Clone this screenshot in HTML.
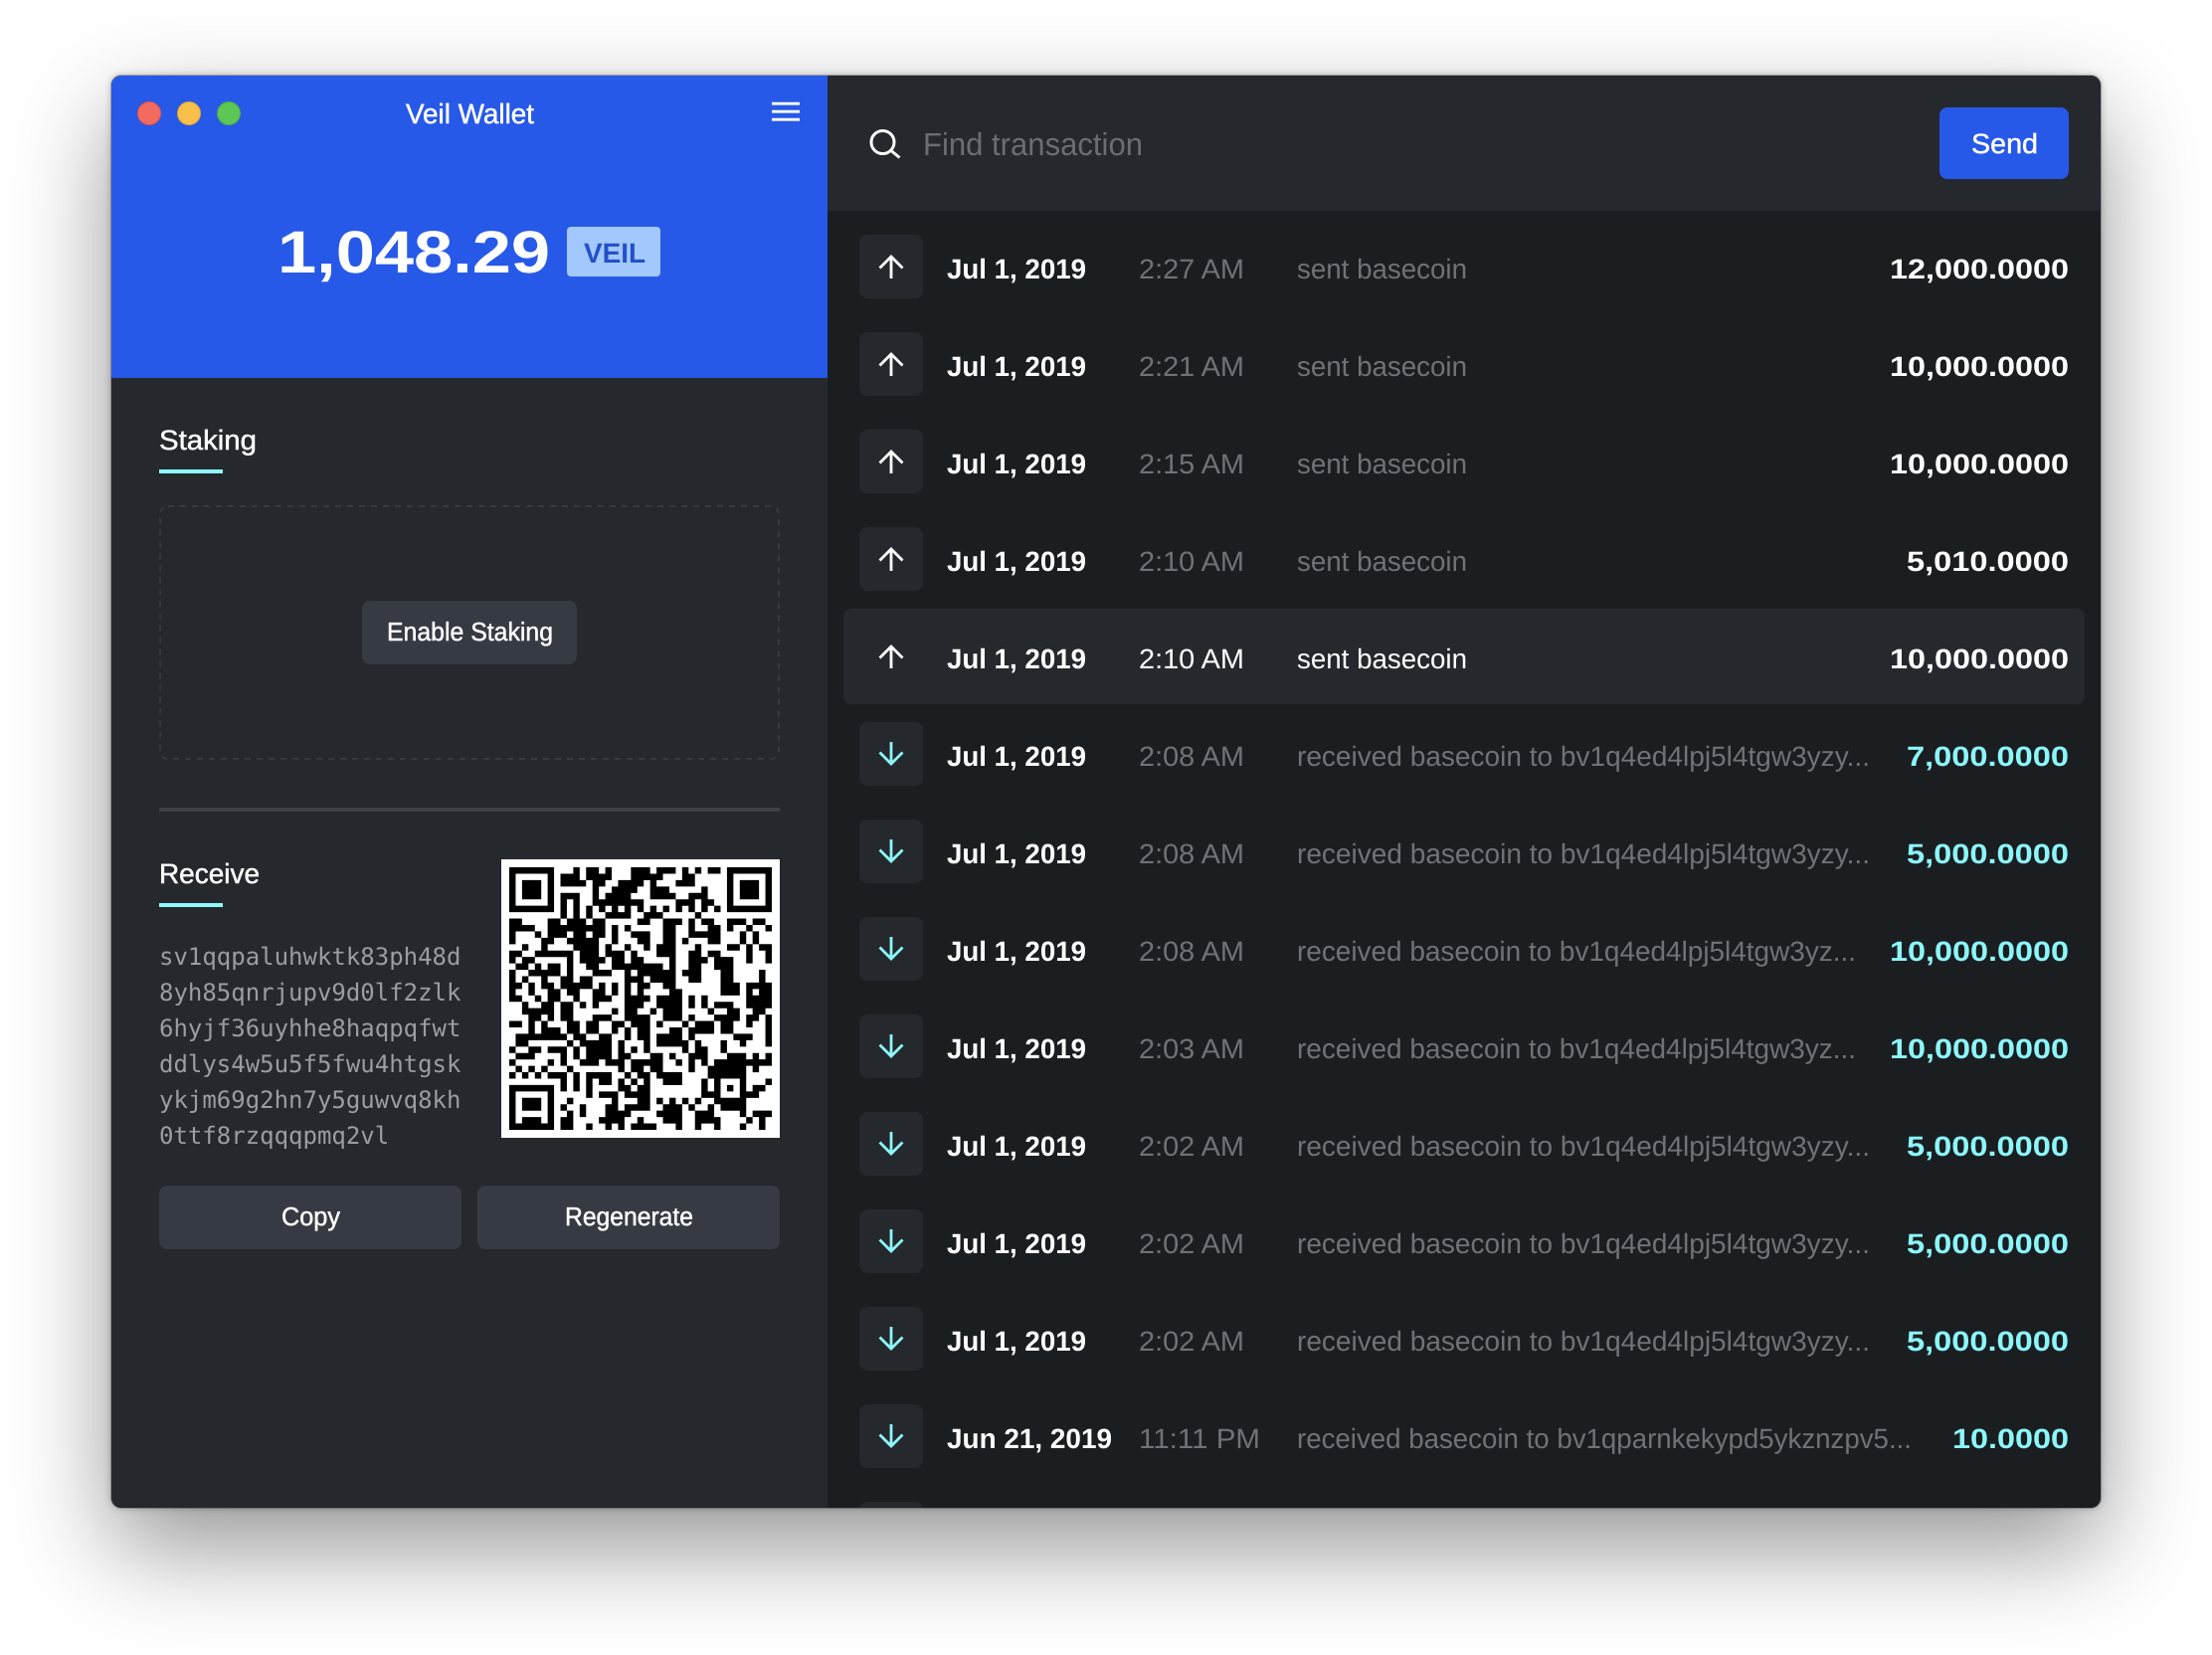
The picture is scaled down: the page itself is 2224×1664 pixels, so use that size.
<!DOCTYPE html>
<html lang="en">
<head>
<meta charset="utf-8">
<title>Veil Wallet</title>
<style>
html,body{margin:0;padding:0;width:2224px;height:1664px;background:#fff;overflow:hidden}
#win{position:absolute;left:112px;top:76px;width:2000px;height:1440px;border-radius:10px;overflow:hidden;background:#25282d;
box-shadow:0 40px 100px rgba(0,0,0,.42),0 0 8px rgba(0,0,0,.28),0 0 0 1px rgba(0,0,0,.22)}
svg{display:block}
text{font-family:"Liberation Sans",sans-serif;text-rendering:geometricPrecision}
.m{stroke-width:.45}
.d{font-size:28px;font-weight:700;fill:#fff}
.t{font-size:28px;fill:#6f7276}
.a{font-size:28px;font-weight:700;fill:#fff}
.c{fill:#8cf7fa}
.w{fill:#fff}
.mono{font-family:"DejaVu Sans Mono","Liberation Mono",monospace;font-size:24px;fill:#9a9da1}
</style>
</head>
<body>
<div id="win">
<svg width="2000" height="1440" viewBox="112 76 2000 1440" xmlns="http://www.w3.org/2000/svg">
<defs>
<g id="u" fill="none" stroke="#fff" stroke-width="2.8"><path d="M896 22V44M884.5 33.5L896 22L907.5 33.5"/></g>
<g id="n" fill="none" stroke="#8cf7fa" stroke-width="2.8"><path d="M896 20V42M884.5 30.5L896 42L907.5 30.5"/></g>
</defs>
<rect x="112" y="76" width="720" height="1440" fill="#25282d"/>
<rect x="112" y="76" width="720" height="304" fill="#2759e8"/>
<rect x="832" y="76" width="1280" height="1440" fill="#1b1e21"/>
<rect x="832" y="76" width="1280" height="136" fill="#25282d"/>

<circle cx="150" cy="114" r="11.5" fill="#f36b5f" stroke="#dd5449" stroke-width="1"/>
<circle cx="190" cy="114" r="11.5" fill="#f8bf4b" stroke="#dfa437" stroke-width="1"/>
<circle cx="230" cy="114" r="11.5" fill="#5cc755" stroke="#4cac44" stroke-width="1"/>
<text x="408" y="124" font-size="28" fill="#fff" stroke="#fff" class="m" textLength="129" lengthAdjust="spacingAndGlyphs">Veil Wallet</text>
<path d="M776 104.2H804M776 112.2H804M776 120.2H804" stroke="#fff" stroke-width="2.8" fill="none"/>

<text x="279" y="274" font-size="60" font-weight="700" fill="#fff" textLength="274" lengthAdjust="spacingAndGlyphs">1,048.29</text>
<rect x="570" y="228" width="94" height="50" rx="4" fill="#a2c8fd"/>
<text x="587" y="264" font-size="28" font-weight="700" fill="#2350c8" textLength="62" lengthAdjust="spacingAndGlyphs">VEIL</text>

<text x="160" y="452" font-size="28" fill="#fff" stroke="#fff" class="m" textLength="98" lengthAdjust="spacingAndGlyphs">Staking</text>
<rect x="160" y="472" width="64" height="4" fill="#8ffbff"/>
<rect x="161" y="509" width="622" height="254" rx="8" fill="none" stroke="#363a40" stroke-width="2" stroke-dasharray="6 6"/>
<rect x="364" y="604" width="216" height="64" rx="8" fill="#363a42"/>
<text x="389" y="644" font-size="26" fill="#fff" stroke="#fff" class="m" textLength="167" lengthAdjust="spacingAndGlyphs">Enable Staking</text>
<rect x="160" y="812" width="624" height="4" fill="#3c4046"/>

<text x="160" y="888" font-size="28" fill="#fff" stroke="#fff" class="m" textLength="101" lengthAdjust="spacingAndGlyphs">Receive</text>
<rect x="160" y="908" width="64" height="4" fill="#8ffbff"/>
<text class="mono" x="160" y="970">sv1qqpaluhwktk83ph48d</text>
<text class="mono" x="160" y="1006">8yh85qnrjupv9d0lf2zlk</text>
<text class="mono" x="160" y="1042">6hyjf36uyhhe8haqpqfwt</text>
<text class="mono" x="160" y="1078">ddlys4w5u5f5fwu4htgsk</text>
<text class="mono" x="160" y="1114">ykjm69g2hn7y5guwvq8kh</text>
<text class="mono" x="160" y="1150">0ttf8rzqqqpmq2vl</text>
<rect x="160" y="1192" width="304" height="64" rx="8" fill="#363a42"/>
<rect x="480" y="1192" width="304" height="64" rx="8" fill="#363a42"/>
<text x="283" y="1232" font-size="26" fill="#fff" stroke="#fff" class="m" textLength="59" lengthAdjust="spacingAndGlyphs">Copy</text>
<text x="568" y="1232" font-size="26" fill="#fff" stroke="#fff" class="m" textLength="129" lengthAdjust="spacingAndGlyphs">Regenerate</text>

<rect x="504" y="864" width="280" height="280" fill="#fff"/>
<path id="qr" fill="#000"/>

<g fill="none" stroke="#fff" stroke-width="3"><circle cx="887.5" cy="143" r="11.5"/><path d="M896 151.5L904.5 158.5"/></g>
<text x="928" y="156" font-size="32" fill="#6a6e72" textLength="221" lengthAdjust="spacingAndGlyphs">Find transaction</text>
<rect x="1950" y="108" width="130" height="72" rx="8" fill="#2759e8"/>
<text x="1982" y="154" font-size="28" fill="#fff" stroke="#fff" class="m" textLength="67" lengthAdjust="spacingAndGlyphs">Send</text>

<rect x="848" y="612" width="1248" height="96" rx="8" fill="#25282d"/>

<g fill="#25282d">
<rect x="864" y="236" width="64" height="64" rx="8"/>
<rect x="864" y="334" width="64" height="64" rx="8"/>
<rect x="864" y="432" width="64" height="64" rx="8"/>
<rect x="864" y="530" width="64" height="64" rx="8"/>
<rect x="864" y="726" width="64" height="64" rx="8"/>
<rect x="864" y="824" width="64" height="64" rx="8"/>
<rect x="864" y="922" width="64" height="64" rx="8"/>
<rect x="864" y="1020" width="64" height="64" rx="8"/>
<rect x="864" y="1118" width="64" height="64" rx="8"/>
<rect x="864" y="1216" width="64" height="64" rx="8"/>
<rect x="864" y="1314" width="64" height="64" rx="8"/>
<rect x="864" y="1412" width="64" height="64" rx="8"/>
<rect x="864" y="1510" width="64" height="64" rx="8"/>
</g>
<use href="#u" y="236"/><use href="#u" y="334"/><use href="#u" y="432"/><use href="#u" y="530"/><use href="#u" y="628"/>
<use href="#n" y="726"/><use href="#n" y="824"/><use href="#n" y="922"/><use href="#n" y="1020"/><use href="#n" y="1118"/><use href="#n" y="1216"/><use href="#n" y="1314"/><use href="#n" y="1412"/>

<text class="d" x="952" y="280" textLength="140" lengthAdjust="spacingAndGlyphs">Jul 1, 2019</text>
<text class="t" x="1145" y="280" textLength="106" lengthAdjust="spacingAndGlyphs">2:27 AM</text>
<text class="t" x="1304" y="280" textLength="171" lengthAdjust="spacingAndGlyphs">sent basecoin</text>
<text class="a" x="1900" y="280" textLength="180" lengthAdjust="spacingAndGlyphs">12,000.0000</text>

<text class="d" x="952" y="378" textLength="140" lengthAdjust="spacingAndGlyphs">Jul 1, 2019</text>
<text class="t" x="1145" y="378" textLength="106" lengthAdjust="spacingAndGlyphs">2:21 AM</text>
<text class="t" x="1304" y="378" textLength="171" lengthAdjust="spacingAndGlyphs">sent basecoin</text>
<text class="a" x="1900" y="378" textLength="180" lengthAdjust="spacingAndGlyphs">10,000.0000</text>

<text class="d" x="952" y="476" textLength="140" lengthAdjust="spacingAndGlyphs">Jul 1, 2019</text>
<text class="t" x="1145" y="476" textLength="106" lengthAdjust="spacingAndGlyphs">2:15 AM</text>
<text class="t" x="1304" y="476" textLength="171" lengthAdjust="spacingAndGlyphs">sent basecoin</text>
<text class="a" x="1900" y="476" textLength="180" lengthAdjust="spacingAndGlyphs">10,000.0000</text>

<text class="d" x="952" y="574" textLength="140" lengthAdjust="spacingAndGlyphs">Jul 1, 2019</text>
<text class="t" x="1145" y="574" textLength="106" lengthAdjust="spacingAndGlyphs">2:10 AM</text>
<text class="t" x="1304" y="574" textLength="171" lengthAdjust="spacingAndGlyphs">sent basecoin</text>
<text class="a" x="1917" y="574" textLength="163" lengthAdjust="spacingAndGlyphs">5,010.0000</text>

<text class="d" x="952" y="672" textLength="140" lengthAdjust="spacingAndGlyphs">Jul 1, 2019</text>
<text class="t w" x="1145" y="672" textLength="106" lengthAdjust="spacingAndGlyphs">2:10 AM</text>
<text class="t w" x="1304" y="672" textLength="171" lengthAdjust="spacingAndGlyphs">sent basecoin</text>
<text class="a" x="1900" y="672" textLength="180" lengthAdjust="spacingAndGlyphs">10,000.0000</text>

<text class="d" x="952" y="770" textLength="140" lengthAdjust="spacingAndGlyphs">Jul 1, 2019</text>
<text class="t" x="1145" y="770" textLength="106" lengthAdjust="spacingAndGlyphs">2:08 AM</text>
<text class="t" x="1304" y="770" textLength="576" lengthAdjust="spacingAndGlyphs">received basecoin to bv1q4ed4lpj5l4tgw3yzy...</text>
<text class="a c" x="1917" y="770" textLength="163" lengthAdjust="spacingAndGlyphs">7,000.0000</text>

<text class="d" x="952" y="868" textLength="140" lengthAdjust="spacingAndGlyphs">Jul 1, 2019</text>
<text class="t" x="1145" y="868" textLength="106" lengthAdjust="spacingAndGlyphs">2:08 AM</text>
<text class="t" x="1304" y="868" textLength="576" lengthAdjust="spacingAndGlyphs">received basecoin to bv1q4ed4lpj5l4tgw3yzy...</text>
<text class="a c" x="1917" y="868" textLength="163" lengthAdjust="spacingAndGlyphs">5,000.0000</text>

<text class="d" x="952" y="966" textLength="140" lengthAdjust="spacingAndGlyphs">Jul 1, 2019</text>
<text class="t" x="1145" y="966" textLength="106" lengthAdjust="spacingAndGlyphs">2:08 AM</text>
<text class="t" x="1304" y="966" textLength="562" lengthAdjust="spacingAndGlyphs">received basecoin to bv1q4ed4lpj5l4tgw3yz...</text>
<text class="a c" x="1900" y="966" textLength="180" lengthAdjust="spacingAndGlyphs">10,000.0000</text>

<text class="d" x="952" y="1064" textLength="140" lengthAdjust="spacingAndGlyphs">Jul 1, 2019</text>
<text class="t" x="1145" y="1064" textLength="106" lengthAdjust="spacingAndGlyphs">2:03 AM</text>
<text class="t" x="1304" y="1064" textLength="562" lengthAdjust="spacingAndGlyphs">received basecoin to bv1q4ed4lpj5l4tgw3yz...</text>
<text class="a c" x="1900" y="1064" textLength="180" lengthAdjust="spacingAndGlyphs">10,000.0000</text>

<text class="d" x="952" y="1162" textLength="140" lengthAdjust="spacingAndGlyphs">Jul 1, 2019</text>
<text class="t" x="1145" y="1162" textLength="106" lengthAdjust="spacingAndGlyphs">2:02 AM</text>
<text class="t" x="1304" y="1162" textLength="576" lengthAdjust="spacingAndGlyphs">received basecoin to bv1q4ed4lpj5l4tgw3yzy...</text>
<text class="a c" x="1917" y="1162" textLength="163" lengthAdjust="spacingAndGlyphs">5,000.0000</text>

<text class="d" x="952" y="1260" textLength="140" lengthAdjust="spacingAndGlyphs">Jul 1, 2019</text>
<text class="t" x="1145" y="1260" textLength="106" lengthAdjust="spacingAndGlyphs">2:02 AM</text>
<text class="t" x="1304" y="1260" textLength="576" lengthAdjust="spacingAndGlyphs">received basecoin to bv1q4ed4lpj5l4tgw3yzy...</text>
<text class="a c" x="1917" y="1260" textLength="163" lengthAdjust="spacingAndGlyphs">5,000.0000</text>

<text class="d" x="952" y="1358" textLength="140" lengthAdjust="spacingAndGlyphs">Jul 1, 2019</text>
<text class="t" x="1145" y="1358" textLength="106" lengthAdjust="spacingAndGlyphs">2:02 AM</text>
<text class="t" x="1304" y="1358" textLength="576" lengthAdjust="spacingAndGlyphs">received basecoin to bv1q4ed4lpj5l4tgw3yzy...</text>
<text class="a c" x="1917" y="1358" textLength="163" lengthAdjust="spacingAndGlyphs">5,000.0000</text>

<text class="d" x="952" y="1456" textLength="166" lengthAdjust="spacingAndGlyphs">Jun 21, 2019</text>
<text class="t" x="1145" y="1456" textLength="122" lengthAdjust="spacingAndGlyphs">11:11 PM</text>
<text class="t" x="1304" y="1456" textLength="618" lengthAdjust="spacingAndGlyphs">received basecoin to bv1qparnkekypd5ykznzpv5...</text>
<text class="a c" x="1963" y="1456" textLength="117" lengthAdjust="spacingAndGlyphs">10.0000</text>
</svg>
</div>
<script>
var R=[
"#######...#.##.#...###.###.#.#.##.#######",
"#.....#.###.####...#####...##.....#.....#",
"#.###.#.####.##..####.#...###.....#.###.#",
"#.###.#......#..####..###.....#...#.###.#",
"#.###.#.###..#.####...####..###...#.###.#",
"#.....#.#.#..########.....###.##..#.....#",
"#######.#.#.#.#.#.#.#.#.#.#.#.#.#.#######",
"........#.#.#..####..###.....#...........",
"##....##.###.##.....##..###.#.##..###.##.",
"####..#########.#.#.....##..#..##.#..#..#",
"#...#.###.##.##.#..###..##..#####...#.#..",
"#....##..#####..#...##..##.#...##...#.#..",
"..#..#....####.#..#..#.###...#....##.#.##",
"##..######.###.###.#...###..##.##....#..#",
"#.##.....#.####.##.##....#..###.###..#..#",
".##.#.##.#..##..########.#..##..###......",
"#..#####.#...###..#.######.###...##....#.",
"#.#..#..##.##.....###.####..##...##....#.",
"##.#.##.#####.#.#.#.##..##.......###.####",
"#..#..##.##..##.#.#.#....##......###.#.##",
"##..#.##..#..###..####.####.#.#......####",
"..#..##.##.#.#....###..####.#.#.###..####",
"..#####.##......#.##..#.###....#..##..##.",
"...##.#.##...###..####..###.#...####.##.#",
"##.#.#...##.##..##.###.#...#.###.##..#..#",
"...#.###.##.##..#.#.##...##.####.##.....#",
".########.##..##..#.##.####.#......###..#",
".##......#.#####.#...#.#####.#...#..#...#",
"#..##.###.#.####.#.#.#.....#.##..#.......",
".###....#.#.####.##...##.#..###...###.#.#",
"#.....#.#..###.###.#####..#.#.#.#########",
".#.#.#...#.......#.##.##....#..######.#..",
"#.#.#.###.#.####..#.##.####....######....",
"........#.#.#.##.#.#.#..###...#.#...#...#",
"#######.#.#.#....##.##........#.#.#.#.##.",
"#.....#.....#.###.####........###...###..",
"#.###.#..#......#...##.#.#.#.#..#####....",
"#.###.#.#..#...##.####..###.#..#.####....",
"#.....#..#.#...####....####..###....#.###",
"#.###.#.##....####..#...###..####....#.#.",
"#######.##..#..#.#.####...#..#..#...#..#."
];
var s=6.439,d="";
for(var r=0;r<R.length;r++){var c=0,row=R[r];
while(c<row.length){if(row[c]==="#"){var b=c;while(c<row.length&&row[c]==="#")c++;
d+="M"+(512+b*s).toFixed(2)+" "+(872+r*s).toFixed(2)+"h"+((c-b)*s).toFixed(2)+"v6.5h-"+((c-b)*s).toFixed(2)+"z";}else c++;}}
document.getElementById("qr").setAttribute("d",d);
</script>
</body>
</html>
